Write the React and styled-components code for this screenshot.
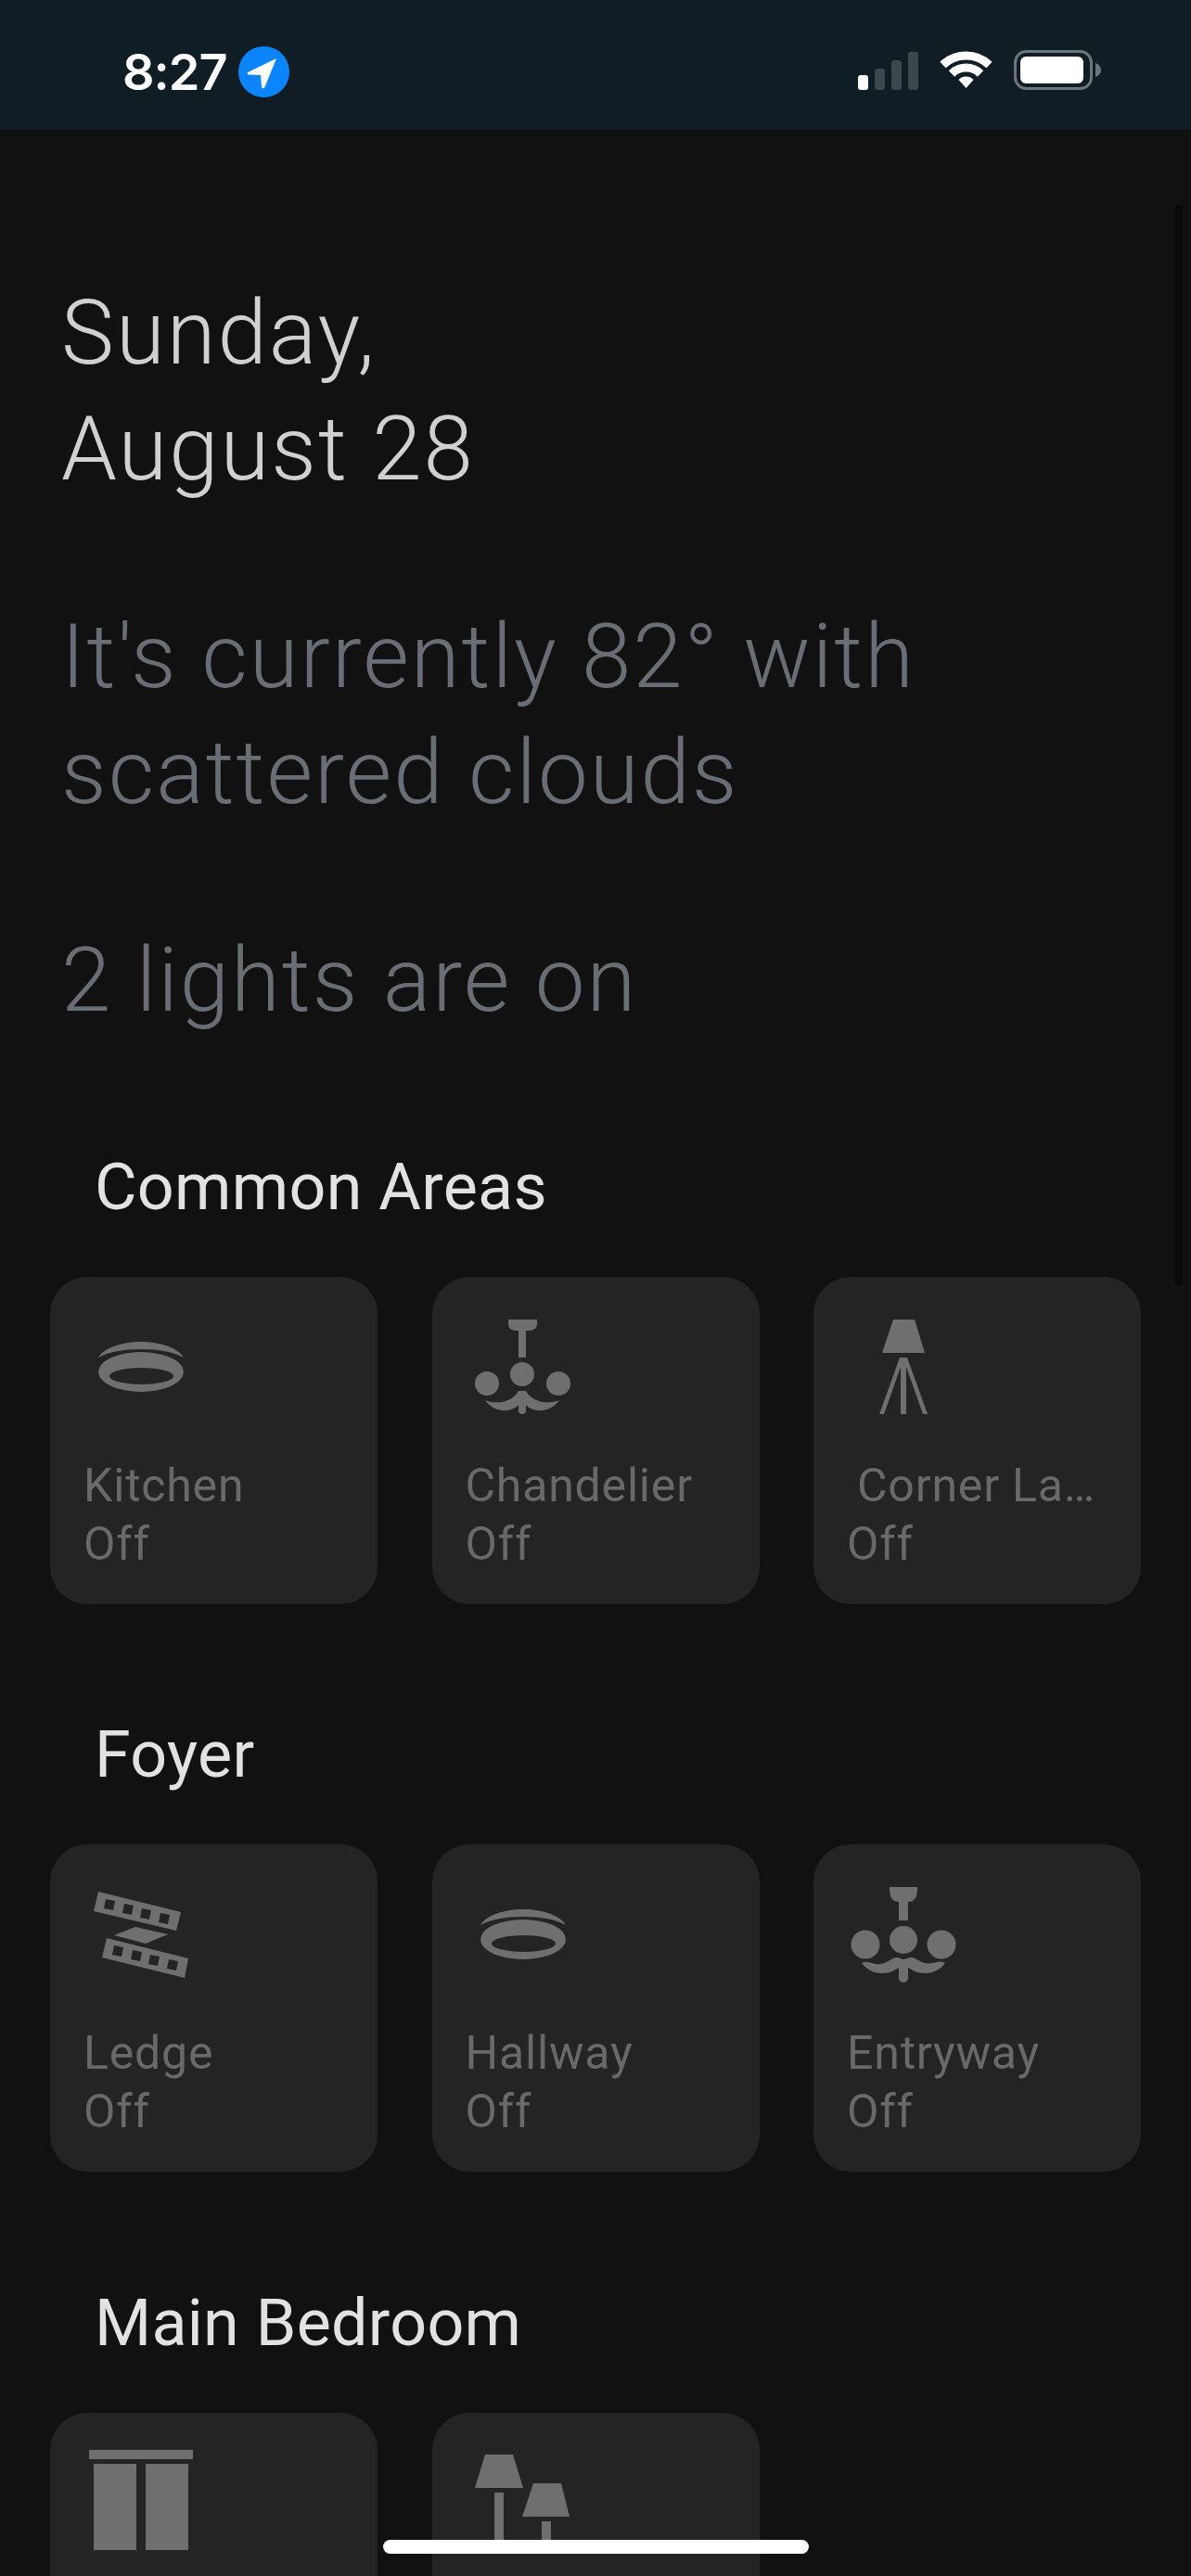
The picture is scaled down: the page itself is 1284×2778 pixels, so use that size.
import React from 'react';
import styled, { createGlobalStyle } from 'styled-components';

const Global = createGlobalStyle`
  html, body {
    margin: 0;
    height: 2778px;
    overflow: hidden;
    background: #111111;
  }
`
const Page = styled.div`
  position: relative;
  width: 1284px;
  height: 2778px;
  overflow: hidden;
  background: #111111;
  font-family: Roboto, "Liberation Sans", sans-serif;
`
const StatusBar = styled.header`
  display: flex;
  justify-content: space-between;
  align-items: flex-start;
  height: 140px;
  box-sizing: border-box;
  padding: 50px 97px 0 132px;
  background: #101d24;
`
const Clock = styled.div`
  display: flex;
  align-items: center;
  gap: 12px;
  height: 55px;
  font-family: Inter, "Liberation Sans", sans-serif;
  font-weight: 600;
  font-size: 54px;
  letter-spacing: -1px;
  line-height: 55px;
  color: #ffffff;
`
const StatusIcons = styled.div`
  display: flex;
  align-items: flex-end;
  gap: 23px;
  margin-top: 4px;
`
const Summary = styled.section`
  display: flex;
  flex-direction: column;
  gap: 99px;
  padding: 157px 66px 0;
`
const Line = styled.p`
  margin: 0;
  font-weight: 300;
  font-size: 96px;
  line-height: 125px;
  letter-spacing: 2px;
  color: ${(props) => (props.$muted ? '#686e74' : '#d0d0d0')};
`
const Room = styled.section`
  margin-top: ${(props) => props.$top}px;
  padding-left: 54px;
`
const RoomTitle = styled.h2`
  margin: 0 0 57px 48px;
  font-weight: 400;
  font-size: 70px;
  line-height: 80px;
  letter-spacing: 0.3px;
  color: #e2e2e2;
`
const TileGrid = styled.div`
  display: grid;
  grid-template-columns: repeat(3, 353px);
  gap: 58.5px;
`
const Tile = styled.div`
  height: 353px;
  box-sizing: border-box;
  padding: 37px 36px;
  border-radius: 40px;
  background: #242424;
  color: #696969;
  font-size: 50px;
  line-height: 63px;
  letter-spacing: 0.8px;
`
const TileIcon = styled.svg`
  display: block;
  width: 120px;
  height: 120px;
  margin: 0 0 37px 1px;
  fill: #6f6f6f;
`
const TileName = styled.div`
  padding-left: ${(props) => props.$indent || 0}px;
  white-space: nowrap;
`
const TileState = styled.div``
const ScrollThumb = styled.div`
  position: absolute;
  top: 221px;
  right: 9px;
  width: 9px;
  height: 1165px;
  border-radius: 5px;
  background: #0a0a0a;
`
const HomeIndicator = styled.div`
  position: absolute;
  left: 413px;
  bottom: 24px;
  width: 459px;
  height: 15px;
  border-radius: 8px;
  background: #ffffff;
`

const LocationIcon = () => (
  <svg width="55" height="55" viewBox="0 0 55 55">
    <circle cx="27.5" cy="27.5" r="27.5" fill="#0a84ff" />
    <path d="M41 13 L10 28 Q9 30 11 30.5 L24 31 L25 44 Q26 46 28 45 Z" fill="#fff" />
  </svg>
)

const SignalIcon = () => (
  <svg width="65" height="41" viewBox="0 0 65 41">
    <rect x="0" y="25" width="11" height="16" rx="3" fill="#fff" />
    <rect x="18" y="18" width="11" height="23" rx="3" fill="#3d484e" />
    <rect x="36" y="9" width="11" height="32" rx="3" fill="#3d484e" />
    <rect x="54" y="0" width="11" height="41" rx="3" fill="#3d484e" />
  </svg>
)

const WifiIcon = () => (
  <svg width="57" height="42" viewBox="0 0 57 42" fill="none" stroke="#fff" strokeWidth="9">
    <path d="M3.5 15 A36 36 0 0 1 53.5 15" />
    <path d="M13 24.5 A22 22 0 0 1 44 24.5" />
    <path d="M20.5 31 L28.5 40 L36.5 31 A11 11 0 0 0 20.5 31 Z" fill="#fff" stroke="none" />
  </svg>
)

const BatteryIcon = () => (
  <svg width="94" height="43" viewBox="0 0 94 43">
    <rect x="1.5" y="1.5" width="82" height="40" rx="12" fill="none" stroke="#6c767a" strokeWidth="3" />
    <rect x="7" y="7" width="68" height="29" rx="6" fill="#fff" />
    <path d="M88 14 Q94 16 94 21.5 Q94 27 88 29 Z" fill="#6c767a" />
  </svg>
)

const RecessedIcon = () => (
  <TileIcon viewBox="0 0 120 120">
    <path d="M15 50 C20 40 40 33 61 33 C82 33 102 40 107 50 C96 44 80 41 61 41 C42 41 26 44 15 50 Z" />
    <path
      fillRule="evenodd"
      d="M15 65.5 A46 21.5 0 1 1 107 65.5 A46 21.5 0 1 1 15 65.5 Z M27 70 A34.5 9 0 1 0 96 70 A34.5 9 0 1 0 27 70 Z"
    />
  </TileIcon>
)

const ChandelierIcon = () => (
  <TileIcon viewBox="0 0 120 120">
    <path d="M45 9 H76 V14 Q76 21 66 21 H64 V50 H56 V21 H54 Q45 21 45 14 Z" />
    <circle cx="60" cy="68" r="13" />
    <circle cx="22" cy="78" r="13" />
    <circle cx="99" cy="78" r="13" />
    <path d="M20 96 C30 100 48 100 56 86 H64 C72 100 90 100 100 96 C90 110 72 110 64 101 V107 A4 4 0 0 1 56 107 V101 C48 110 30 110 20 96 Z" />
  </TileIcon>
)

const TripodIcon = () => (
  <TileIcon viewBox="0 0 120 120">
    <path d="M49 9 H72 L83 45 H37 Z" />
    <path d="M56 50 H64 L86 111 H81 L63 60 V111 H57 V60 L39 111 H34 Z" />
  </TileIcon>
)

const LedgeIcon = () => (
  <TileIcon viewBox="0 0 120 120">
    <path
      fillRule="evenodd"
      d="M15 14 L104 36 L99 56 L10 35 Z M23 22 L21 32 L31 34 L33 24 Z M43 27 L41 37 L51 39 L53 29 Z M62 32 L60 42 L70 44 L72 34 Z M82 37 L80 47 L90 49 L92 39 Z"
    />
    <path d="M55 52 L90 60 L66 70 L32 61 Z" />
    <path
      fillRule="evenodd"
      d="M24 64 L112 86 L108 107 L19 85 Z M32 72 L30 82 L40 84 L42 74 Z M52 77 L50 87 L60 89 L62 79 Z M71 82 L69 92 L79 94 L81 84 Z M91 87 L89 97 L99 99 L101 89 Z"
    />
  </TileIcon>
)

const PendantIcon = () => (
  <TileIcon viewBox="0 0 120 120">
    <path d="M45 9 H75 V11 Q75 25 65 25 V45 H55 V25 Q45 25 45 11 Z" />
    <circle cx="60" cy="66" r="15" />
    <circle cx="19" cy="71" r="15.5" />
    <circle cx="101" cy="71" r="15.5" />
    <path d="M15 91 C22 87 28 94 36 92 C44 90 48 85 53 85 C56 85 58 87 60 87 C62 87 64 85 69 85 C74 85 78 91 84 91 C92 93 98 87 105 91 C98 100 90 102 83 102 C75 102 70 99 65 96 V107 A5 5 0 0 1 55 107 V96 C50 99 45 102 38 102 C30 102 22 100 15 91 Z" />
  </TileIcon>
)

const CurtainIcon = () => (
  <TileIcon viewBox="0 0 120 120">
    <rect x="5" y="3" width="112" height="10" />
    <rect x="10" y="18" width="46" height="93" />
    <rect x="66" y="18" width="46" height="93" />
  </TileIcon>
)

const TwinLampIcon = () => (
  <TileIcon viewBox="0 0 120 120">
    <path d="M20 8 H50 L61 44 H9 Z" />
    <rect x="30" y="49" width="10" height="62" />
    <path d="M72 39 H102 L111 75 H60 Z" />
    <rect x="81" y="80" width="10" height="31" />
  </TileIcon>
)

const rooms = [
  {
    title: 'Common Areas',
    top: 120,
    lights: [
      { name: 'Kitchen', icon: RecessedIcon },
      { name: 'Chandelier', icon: ChandelierIcon },
      { name: 'Corner La…', icon: TripodIcon, indent: 11 },
    ],
  },
  {
    title: 'Foyer',
    top: 122,
    lights: [
      { name: 'Ledge', icon: LedgeIcon },
      { name: 'Hallway', icon: RecessedIcon },
      { name: 'Entryway', icon: PendantIcon },
    ],
  },
  {
    title: 'Main Bedroom',
    top: 123,
    lights: [{ icon: CurtainIcon }, { icon: TwinLampIcon }],
  },
]

const App = () => {
  return (
    <Page>
      <Global />
      <StatusBar>
        <Clock>
          8:27
          <LocationIcon />
        </Clock>
        <StatusIcons>
          <SignalIcon />
          <WifiIcon />
          <BatteryIcon />
        </StatusIcons>
      </StatusBar>

      <Summary>
        <Line>Sunday,<br />August 28</Line>
        <Line $muted>It's currently 82° with<br />scattered clouds</Line>
        <Line $muted>2 lights are on</Line>
      </Summary>

      {rooms.map((room) => (
        <Room key={room.title} $top={room.top}>
          <RoomTitle>{room.title}</RoomTitle>
          <TileGrid>
            {room.lights.map((light, i) => (
              <Tile key={i}>
                <light.icon />
                {light.name && <TileName $indent={light.indent}>{light.name}</TileName>}
                {light.name && <TileState>Off</TileState>}
              </Tile>
            ))}
          </TileGrid>
        </Room>
      ))}

      <ScrollThumb />
      <HomeIndicator />
    </Page>
  );
};

export default App;
